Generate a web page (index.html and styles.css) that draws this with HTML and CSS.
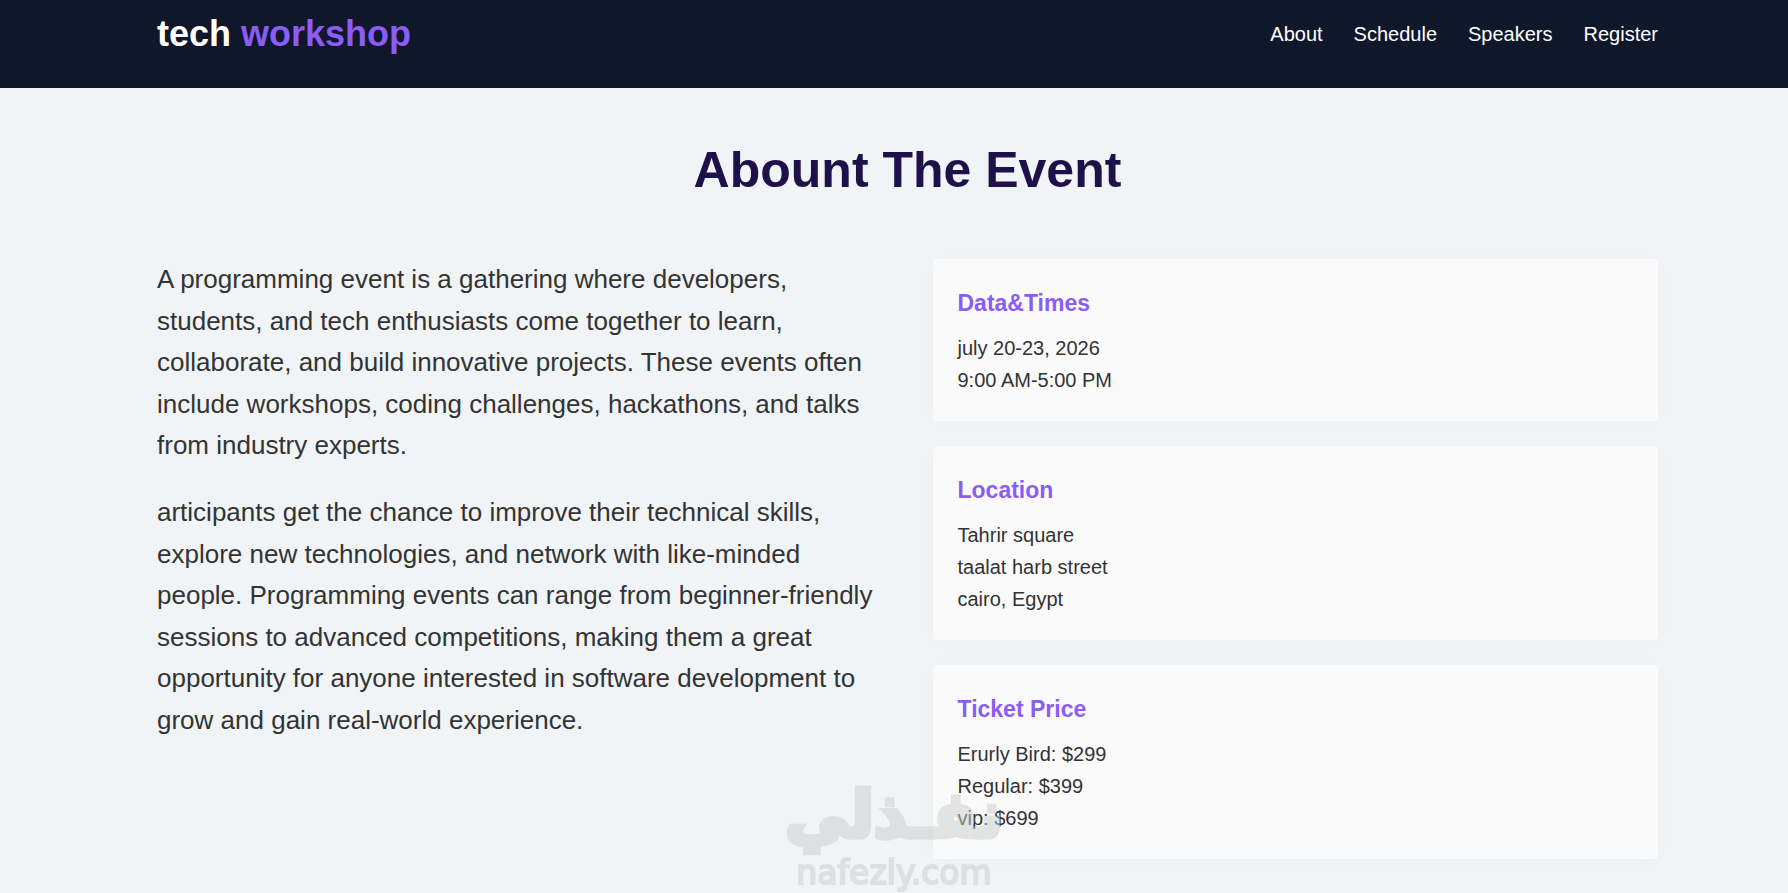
FILE: index.html
```html
<!DOCTYPE html>
<html lang="en">
<head>
<meta charset="utf-8">
<title>Tech Workshop</title>
<link rel="stylesheet" href="styles.css">
</head>
<body>
<header class="header">
  <div class="container header-row">
    <div class="logo">tech <span class="logo-accent">workshop</span></div>
    <nav class="nav">
      <a href="#about">About</a>
      <a href="#schedule">Schedule</a>
      <a href="#speakers">Speakers</a>
      <a href="#register">Register</a>
    </nav>
  </div>
</header>
<main class="container about" id="about">
  <h1 class="title">Abount The Event</h1>
  <div class="columns">
    <div class="text">
      <p>A programming event is a gathering where developers, students, and tech enthusiasts come together to learn, collaborate, and build innovative projects. These events often include workshops, coding challenges, hackathons, and talks from industry experts.</p>
      <p>articipants get the chance to improve their technical skills, explore new technologies, and network with like-minded people. Programming events can range from beginner-friendly sessions to advanced competitions, making them a great opportunity for anyone interested in software development to grow and gain real-world experience.</p>
    </div>
    <div class="cards">
      <section class="card">
        <h2>Data&amp;Times</h2>
        <p>july 20-23, 2026</p>
        <p>9:00 AM-5:00 PM</p>
      </section>
      <section class="card">
        <h2>Location</h2>
        <p>Tahrir square</p>
        <p>taalat harb street</p>
        <p>cairo, Egypt</p>
      </section>
      <section class="card">
        <h2>Ticket Price</h2>
        <p>Erurly Bird: $299</p>
        <p>Regular: $399</p>
        <p>vip: $699</p>
      </section>
    </div>
  </div>
</main>
<div class="watermark">
  <span class="watermark-ar" lang="ar" dir="rtl">نفـذلي</span>
  <span class="watermark-en">nafezly.com</span>
</div>
</body>
</html>
```
FILE: styles.css
```css
* {
  box-sizing: border-box;
  margin: 0;
  padding: 0;
}

body {
  background: #f0f4f7;
  color: #333;
  font-family: "Liberation Sans", Arial, sans-serif;
  line-height: 1.6;
}

.container {
  padding-left: 157px;
  padding-right: 130px;
}

.header {
  background: #0f172a;
  color: #fff;
  padding: 5px 0 26px;
}

.header-row {
  display: flex;
  align-items: center;
  justify-content: space-between;
}

.logo {
  font-size: 36px;
  font-weight: bold;
  line-height: 57px;
}

.logo-accent {
  color: #8b5cf6;
}

.nav {
  display: flex;
  gap: 31px;
}

.nav a {
  color: #fff;
  font-size: 20px;
  text-decoration: none;
}

.about {
  padding-top: 50px;
  padding-bottom: 35px;
}

.title {
  color: #1e1048;
  font-size: 50px;
  line-height: 64px;
  margin-bottom: 57px;
  text-align: center;
}

.columns {
  display: grid;
  grid-template-columns: 1fr 1fr;
  gap: 50px;
}

.text {
  font-size: 26px;
}

.text p {
  margin-bottom: 25px;
}

.cards {
  display: flex;
  flex-direction: column;
  gap: 25px;
}

.card {
  background: #fafafa;
  border-radius: 4px;
  box-shadow: 0 2px 20px rgba(0, 60, 60, 0.02);
  font-size: 20px;
  padding: 25px;
}

.card h2 {
  color: #8b5cf6;
  font-size: 23px;
  line-height: 38px;
  margin-bottom: 10px;
}

.watermark {
  align-items: center;
  bottom: 0;
  color: #c9cbcc;
  display: flex;
  flex-direction: column;
  left: 50%;
  opacity: 0.5;
  position: fixed;
  transform: translateX(-50%);
}

.watermark-ar {
  -webkit-text-stroke: 5px #c9cbcc;
  font-family: "DejaVu Sans", sans-serif;
  font-size: 64px;
  font-weight: bold;
  line-height: 76px;
  stroke-linejoin: round;
}

.watermark-en {
  -webkit-text-stroke: 2px #c9cbcc;
  font-family: "DejaVu Sans", sans-serif;
  font-size: 33px;
  line-height: 40px;
}
```
